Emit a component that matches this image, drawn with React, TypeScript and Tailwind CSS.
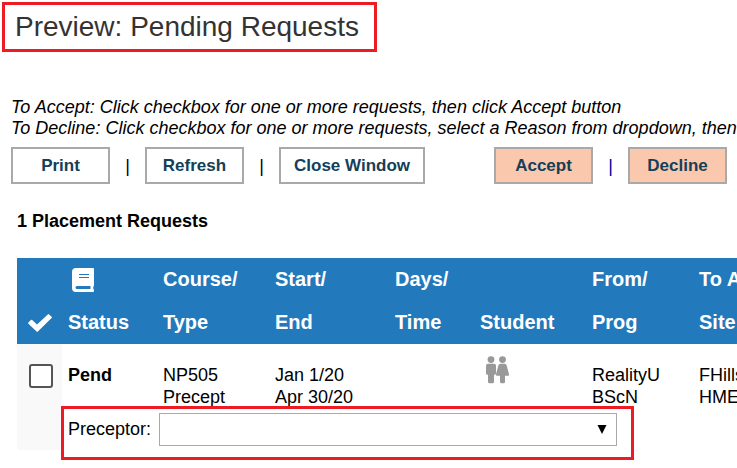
import React, { useState } from "react";

interface PlacementRequest {
  id: number;
  status: string;
  course: string;
  type: string;
  start: string;
  end: string;
  from: string;
  prog: string;
  agency: string;
  site: string;
}

const requests: PlacementRequest[] = [
  {
    id: 1,
    status: "Pend",
    course: "NP505",
    type: "Precept",
    start: "Jan 1/20",
    end: "Apr 30/20",
    from: "RealityU",
    prog: "BScN",
    agency: "FHills",
    site: "HME",
  },
];

const BookIcon: React.FC = () => (
  <svg viewBox="0 0 22 24" className="ml-1 h-6 w-[22px]" fill="currentColor" aria-hidden="true">
    <path
      fillRule="evenodd"
      d="M4 0H21a1 1 0 0 1 1 1v16.500a1 1 0 0 1-.6.900c-.3.800-.3 1.800 0 2.600.4.200.6.500.6 1v1a1 1 0 0 1-1 1H4a4 4 0 0 1-4-4V4a4 4 0 0 1 4-4zM7 6v1h10V6zM7 9v1h10V9zM5 18a1.500 1.500 0 0 0 0 3H18.500v-3z"
    />
  </svg>
);

const CheckIcon: React.FC = () => (
  <svg viewBox="0 0 24 18" className="mx-auto h-[18px] w-6" fill="currentColor" aria-hidden="true">
    <path d="M8.600 17.600L.4 9.700a.8.800 0 0 1 0-1.200L2.900 6a.9.900 0 0 1 1.300 0L9 10.600 19.800.4a.9.900 0 0 1 1.300 0l2.500 2.400a.8.800 0 0 1 0 1.200L9.900 17.600a.9.900 0 0 1-1.300 0z" />
  </svg>
);

const StudentIcon: React.FC = () => (
  <svg viewBox="0 0 25 28" className="ml-[5px] h-7 w-[25px] text-[#999999]" fill="currentColor" aria-hidden="true">
    <circle cx="6" cy="3.600" r="3.400" />
    <path d="M3 7.800h6a2 2 0 0 1 2 2v7.400a1.500 1.500 0 0 1-1.500 1.500H9v7a1.500 1.500 0 0 1-1.500 1.500h-3A1.500 1.500 0 0 1 3 25.700v-7h-.5A1.500 1.500 0 0 1 1 17.200V9.800a2 2 0 0 1 2-2z" />
    <circle cx="17.500" cy="3.600" r="3.400" />
    <path d="M15.300 7.800h4.400a2 2 0 0 1 1.900 1.500l2.400 9a1.200 1.200 0 0 1-1.200 1.500H20v5.900a1.500 1.500 0 0 1-1.500 1.500h-2a1.500 1.500 0 0 1-1.500-1.500v-5.900h-2.800a1.200 1.200 0 0 1-1.200-1.500l2.400-9a2 2 0 0 1 1.900-1.500z" />
  </svg>
);

const buttonClass =
  "h-[37px] min-w-[99px] border-2 border-[#a9a9a9] px-[13px] text-[17px] font-bold text-[#134058] cursor-pointer";

const Separator: React.FC = () => (
  <span className="w-[35px] text-center text-lg">|</span>
);

const App: React.FC = () => {
  const [selected, setSelected] = useState<number[]>([]);
  const [preceptor, setPreceptor] = useState<string>("");

  const toggle = (id: number) => {
    setSelected((prev) =>
      prev.includes(id) ? prev.filter((item) => item !== id) : [...prev, id]
    );
  };

  return (
    <div className="min-h-screen overflow-hidden bg-white pt-[2px] font-['Liberation_Sans',Arial,sans-serif] text-lg leading-[22px] text-black">
      <h1 className="ml-[2px] w-fit border-3 border-[#ed1c24] pt-[2px] pr-[15px] pb-[2px] pl-[10px] text-[28px] leading-10 whitespace-nowrap text-[#333333]">
        Preview: Pending Requests
      </h1>

      <div className="mt-[45px] ml-[11px] leading-[21px] whitespace-nowrap italic">
        <p>To Accept: Click checkbox for one or more requests, then click Accept button</p>
        <p>To Decline: Click checkbox for one or more requests, select a Reason from dropdown, then</p>
      </div>

      <div className="mt-2 ml-[11px] flex items-center whitespace-nowrap">
        <button className={`${buttonClass} bg-white`}>Print</button>
        <Separator />
        <button className={`${buttonClass} bg-white`}>Refresh</button>
        <Separator />
        <button className={`${buttonClass} bg-white`}>Close Window</button>
        <div className="ml-[69px] flex items-center text-[#000099]">
          <button className={`${buttonClass} bg-[#fac8ad]`}>Accept</button>
          <Separator />
          <button className={`${buttonClass} bg-[#fac8ad]`}>Decline</button>
        </div>
      </div>

      <h2 className="mt-[26px] ml-[17px] font-bold">1 Placement Requests</h2>

      <div className="mt-[26px] ml-[17px]">
        <table className="w-full table-fixed text-left whitespace-nowrap">
          <colgroup>
            <col className="w-[45px]" />
            <col className="w-[95px]" />
            <col className="w-[112px]" />
            <col className="w-[120px]" />
            <col className="w-[85px]" />
            <col className="w-[112px]" />
            <col className="w-[107px]" />
            <col />
          </colgroup>
          <thead className="bg-[#2279bc] text-xl leading-[43px] text-white">
            <tr>
              <th className="p-0 align-bottom">
                <div className="flex h-[43px] items-center">
                  <CheckIcon />
                </div>
              </th>
              <th className="px-[6px]">
                <div className="flex h-[43px] items-center">
                  <BookIcon />
                </div>
                Status
              </th>
              <th className="px-[6px]">Course/<br />Type</th>
              <th className="px-[6px]">Start/<br />End</th>
              <th className="px-[6px]">Days/<br />Time</th>
              <th className="px-[6px] align-bottom">Student</th>
              <th className="px-[6px]">From/<br />Prog</th>
              <th className="px-[6px]">To A<br />Site</th>
            </tr>
          </thead>
          {requests.map((request) => (
            <tbody key={request.id}>
              <tr className="align-top">
                <td rowSpan={2} className="bg-[#f9f9f9] pt-5 pl-3">
                  <input
                    type="checkbox"
                    aria-label="Select request"
                    checked={selected.includes(request.id)}
                    onChange={() => toggle(request.id)}
                    className="block h-6 w-6 appearance-none rounded-[3px] border-2 border-[#555555] bg-white checked:bg-[#555555]"
                  />
                </td>
                <td className="px-[6px] pt-5 font-bold">{request.status}</td>
                <td className="px-[6px] pt-5">{request.course}<br />{request.type}</td>
                <td className="px-[6px] pt-5">{request.start}<br />{request.end}</td>
                <td />
                <td className="px-[6px] pt-3">
                  <StudentIcon />
                </td>
                <td className="px-[6px] pt-5">{request.from}<br />{request.prog}</td>
                <td className="px-[6px] pt-5">{request.agency}<br />{request.site}</td>
              </tr>
              <tr>
                <td colSpan={7} className="relative px-[6px] pt-[5px] pb-1">
                  <div className="flex items-center gap-2">
                    <label htmlFor="preceptor" className="pb-[2px]">Preceptor:</label>
                    <div className="relative w-[458px]">
                      <select
                        id="preceptor"
                        value={preceptor}
                        onChange={(event) => setPreceptor(event.target.value)}
                        className="block h-[33px] w-full appearance-none border border-[#a9a9a9] bg-white px-2"
                      >
                        <option value=""></option>
                      </select>
                      <svg
                        viewBox="0 0 10 9"
                        className="pointer-events-none absolute top-3 right-[10px] h-[9px] w-[10px]"
                        aria-hidden="true"
                      >
                        <path d="M0.500 0h9L5 9z" />
                      </svg>
                    </div>
                  </div>
                  <div className="pointer-events-none absolute -top-[2px] -left-px h-[54px] w-[573px] border-3 border-[#ed1c24]" />
                </td>
              </tr>
            </tbody>
          ))}
        </table>
      </div>
    </div>
  );
};

export default App;
